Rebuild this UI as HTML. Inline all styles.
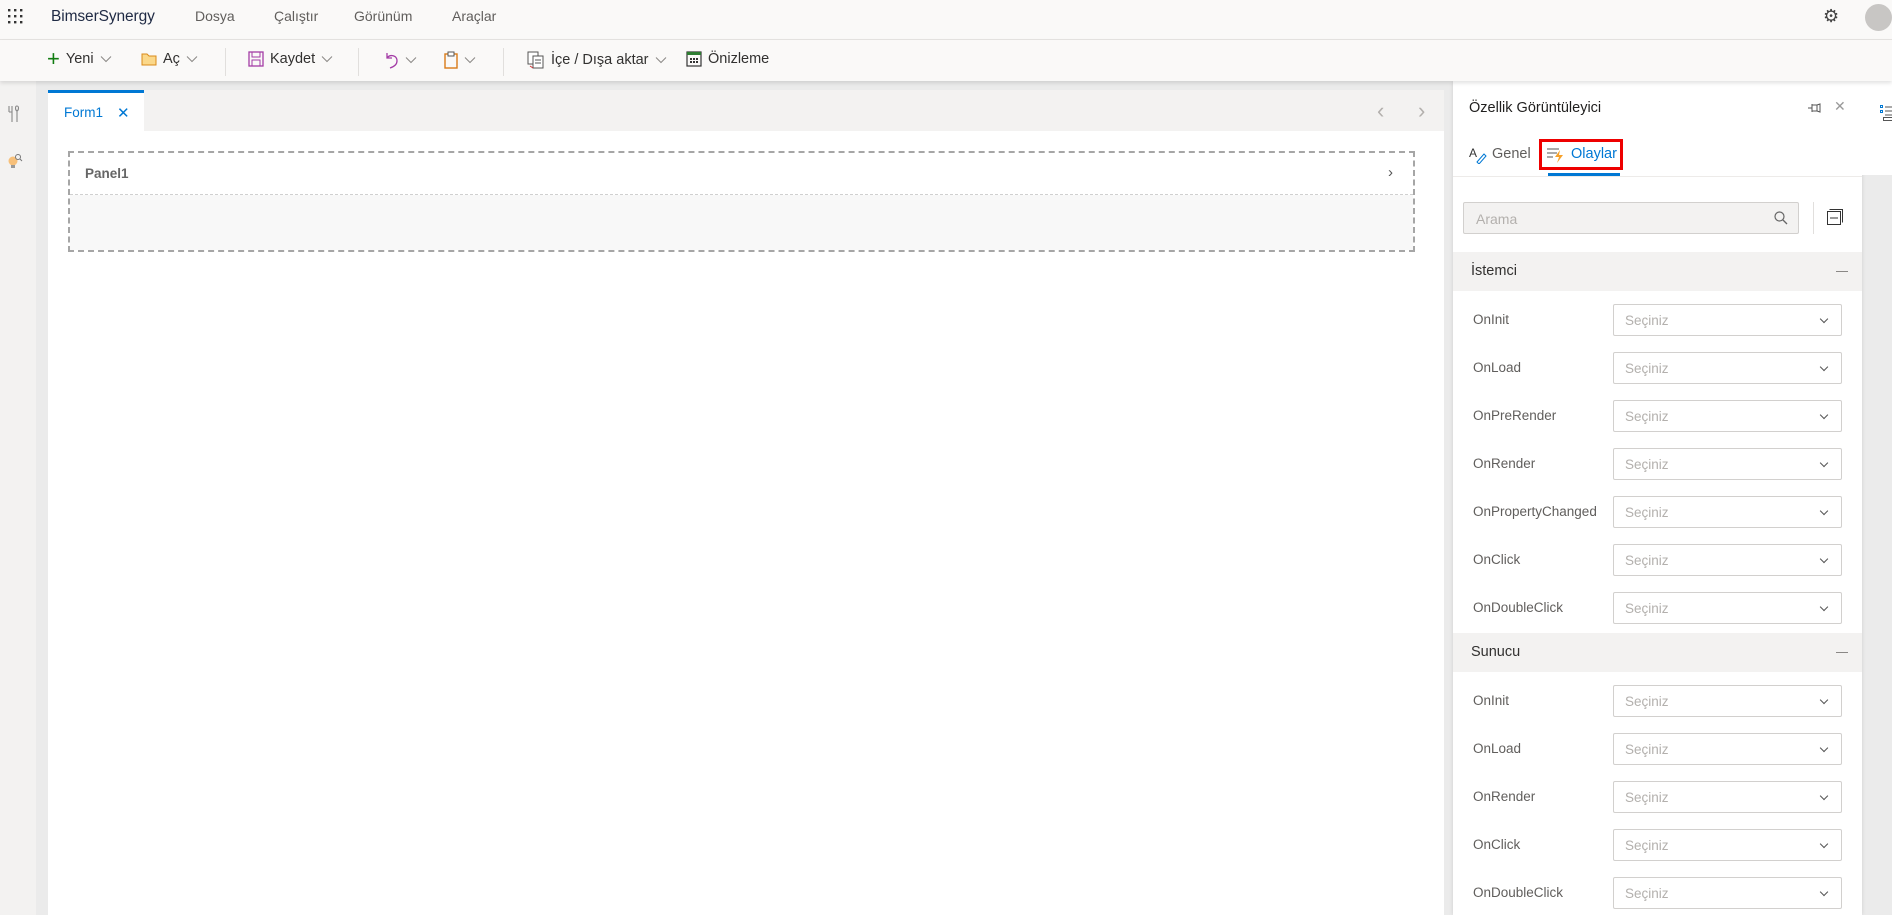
<!DOCTYPE html>
<html><head><meta charset="utf-8"><style>
*{box-sizing:border-box;margin:0;padding:0}
body{width:1892px;height:915px;overflow:hidden;background:#ebebeb;font-family:"Liberation Sans",sans-serif;position:relative;color:#323130}
.a{position:absolute}
.top{left:0;top:0;width:1892px;height:40px;background:#faf9f8;border-bottom:1px solid #e6e4e2}
.tb{left:0;top:40px;width:1892px;height:41px;background:#faf9f8;box-shadow:0 2px 4px rgba(0,0,0,.12);z-index:2}
.menu{font-size:14px;color:#605e5c;top:8px}
.tbi{top:51px;font-size:14.5px;color:#323130;display:flex;align-items:center;gap:6px}
.sep{top:48px;width:1px;height:28px;background:#e1dfdd}
.lbl{left:1473px;font-size:13.5px;color:#605e5c}
.sel{left:1613px;width:229px;height:32px;border:1px solid #d2d0ce;border-radius:2px;background:#fff;font-size:13.5px;color:#b3b0ad;padding:8px 11px}
.sel:after{content:"";position:absolute;right:14px;top:11px;width:5px;height:5px;border-right:1.5px solid #555;border-bottom:1.5px solid #555;transform:rotate(45deg)}
.sec{left:1453px;width:409px;height:39px;background:#f3f2f1;font-size:14.5px;color:#323130;padding:11px 18px}
.sec:after{content:"";position:absolute;right:14px;top:19px;width:12px;height:1px;background:#8a8886}
</style></head><body>
<div class="a top"></div>
<div class="a" style="left:7px;top:8px;width:16px;height:16px">
<svg width="16" height="16"><g fill="#333"><rect x="1" y="1" width="2.4" height="2.4"/><rect x="7" y="1" width="2.4" height="2.4"/><rect x="13" y="1" width="2.4" height="2.4"/><rect x="1" y="7" width="2.4" height="2.4"/><rect x="7" y="7" width="2.4" height="2.4"/><rect x="13" y="7" width="2.4" height="2.4"/><rect x="1" y="13" width="2.4" height="2.4"/><rect x="7" y="13" width="2.4" height="2.4"/><rect x="13" y="13" width="2.4" height="2.4"/></g></svg></div>
<div class="a" style="left:51px;top:8px;font-size:15.5px;color:#1f2a44;letter-spacing:-.1px">BimserSynergy</div>
<div class="a menu" style="left:195px">Dosya</div>
<div class="a menu" style="left:274px">Çalıştır</div>
<div class="a menu" style="left:354px">Görünüm</div>
<div class="a menu" style="left:452px">Araçlar</div>
<div class="a" style="left:1823px;top:6px;font-size:18px;color:#444">⚙</div>
<div class="a" style="left:1865px;top:4px;width:27px;height:27px;border-radius:50%;background:#c8c6c4"></div>

<div class="a tb"></div>
<svg width="0" height="0" style="position:absolute"><defs><symbol id="cv" viewBox="0 0 12 8"><path d="M1 1.5l5 5 5-5" fill="none" stroke="#8a8886" stroke-width="1"/></symbol></defs></svg>
<div class="a tbi" style="left:47px;z-index:3"><span style="color:#107c10;font-size:22px;line-height:14px">+</span> Yeni <svg width="12" height="8"><use href="#cv"/></svg></div>
<div class="a tbi" style="left:141px;z-index:3"><svg width="16" height="14"><path d="M1 2h5l2 2h7v9H1z" fill="#fbd88a" stroke="#d98a1a"/></svg> Aç <svg width="12" height="8"><use href="#cv"/></svg></div>
<div class="a sep" style="left:225px;z-index:3"></div>
<div class="a tbi" style="left:248px;z-index:3"><svg width="16" height="16"><rect x="1" y="1" width="14" height="14" fill="none" stroke="#a33ca6" stroke-width="1.3"/><rect x="4" y="1" width="8" height="5" fill="none" stroke="#a33ca6"/><rect x="4" y="9" width="8" height="6" fill="none" stroke="#a33ca6"/></svg> Kaydet <svg width="12" height="8"><use href="#cv"/></svg></div>
<div class="a sep" style="left:358px;z-index:3"></div>
<div class="a tbi" style="left:383px;z-index:3"><svg width="16" height="18"><path d="M4 2v5h5M4 7c3-4 10-3 10 3 0 4-4 6-7 7" fill="none" stroke="#a33ca6" stroke-width="1.3"/></svg> <svg width="12" height="8"><use href="#cv"/></svg></div>
<div class="a tbi" style="left:444px;z-index:3"><svg width="14" height="18"><rect x="1" y="3" width="12" height="14" fill="none" stroke="#d97b18" stroke-width="1.4"/><rect x="4" y="1" width="6" height="4" fill="#fff" stroke="#555"/></svg> <svg width="12" height="8"><use href="#cv"/></svg></div>
<div class="a sep" style="left:503px;z-index:3"></div>
<div class="a tbi" style="left:527px;z-index:3"><svg width="18" height="18"><rect x="1" y="1" width="10" height="12" fill="#fff" stroke="#555"/><rect x="6" y="5" width="10" height="12" fill="#fff" stroke="#555"/><path d="M8 9h6M8 12h6" stroke="#555"/><path d="M3 15l3 2" stroke="#d13438"/></svg> İçe / Dışa aktar <svg width="12" height="8"><use href="#cv"/></svg></div>
<div class="a tbi" style="left:686px;z-index:3"><svg width="16" height="16"><rect x="1" y="1" width="14" height="14" fill="none" stroke="#333" stroke-width="1.2"/><rect x="1" y="1" width="14" height="3" fill="#2e7d32"/><g fill="#333"><rect x="4" y="7" width="2" height="2"/><rect x="7" y="7" width="2" height="2"/><rect x="10" y="7" width="2" height="2"/><rect x="4" y="10" width="2" height="2"/><rect x="7" y="10" width="2" height="2"/><rect x="10" y="10" width="2" height="2"/></g></svg> Önizleme</div>

<div class="a" style="left:0;top:81px;width:36px;height:834px;background:#f3f2f1"></div>
<div class="a" style="left:6px;top:105px"><svg width="16" height="18"><path d="M3 1v6M6 1v6M3 7h3v10M11 1c-2 0-2 4 0 5v11M11 6c2-1 2-5 0-5" fill="none" stroke="#888" stroke-width="1.1"/></svg></div>
<div class="a" style="left:7px;top:153px"><svg width="16" height="16"><circle cx="6" cy="8" r="4.5" fill="#f7c07a"/><rect x="4" y="12" width="4" height="3" fill="#999"/><circle cx="11" cy="4" r="2.5" fill="none" stroke="#777"/><path d="M13 6l2 2" stroke="#777"/></svg></div>

<div class="a" style="left:48px;top:90px;width:1396px;height:825px;background:#fff"></div>
<div class="a" style="left:144px;top:90px;width:1300px;height:41px;background:#f3f2f1"></div>
<div class="a" style="left:48px;top:90px;width:96px;height:3px;background:#0078d4"></div>
<div class="a" style="left:64px;top:105px;font-size:13.5px;color:#0078d4">Form1</div>
<div class="a" style="left:117px;top:104px;font-size:15px;color:#0078d4">✕</div>
<div class="a" style="left:1377px;top:98px;font-size:22px;color:#b3b0ad">‹</div>
<div class="a" style="left:1418px;top:98px;font-size:22px;color:#b3b0ad">›</div>
<div class="a" style="left:68px;top:151px;width:1347px;height:101px;border:2px dashed #a6a6a6;background:#fff">
 <div style="height:42px;border-bottom:1px dashed #d0d0d0;padding:13px 15px;font-size:13.5px;font-weight:bold;color:#666">Panel1</div>
 <div style="height:55px;background:#f8f8f8"></div>
 <div class="a" style="right:20px;top:11px;font-size:15px;color:#555">›</div>
</div>

<div class="a" style="left:1453px;top:81px;width:409px;height:834px;background:#fff;box-shadow:0 0 4px rgba(0,0,0,.12)"></div>
<div class="a" style="left:1862px;top:81px;width:30px;height:94px;background:#fff"></div>
<div class="a" style="left:1880px;top:105px"><svg width="12" height="16"><g stroke="#0078d4" fill="none"><rect x="0.5" y="0.5" width="2" height="2"/><rect x="0.5" y="5.5" width="2" height="2"/></g><path d="M5 2h8M5 6h8M5 10h8" stroke="#555"/><rect x="3.5" y="12.5" width="9" height="3" fill="none" stroke="#555"/></svg></div>
<div class="a" style="left:1469px;top:100px;font-size:14.5px;color:#201f1e">Özellik Görüntüleyici</div>
<div class="a" style="left:1808px;top:101px"><svg width="14" height="12"><path d="M0 6h4M4 2v8M4 3h5v6H4M9 3l3-1v8l-3-1" fill="none" stroke="#555"/></svg></div>
<div class="a" style="left:1834px;top:98px;font-size:14px;color:#999">✕</div>
<div class="a" style="left:1469px;top:146px"><svg width="18" height="18"><text x="0" y="11" font-size="12" font-family="Liberation Sans" fill="#333">A</text><path d="M8 16l7-8 2 2-7 8z" fill="none" stroke="#0078d4"/></svg></div>
<div class="a" style="left:1492px;top:146px;font-size:14.5px;color:#605e5c">Genel</div>
<div class="a" style="left:1539px;top:139px;width:84px;height:31px;border:3px solid #e00"></div>
<div class="a" style="left:1547px;top:147px"><svg width="18" height="16"><path d="M0 2h12M0 6h10M0 10h6" stroke="#555"/><path d="M13 3l-5 7h4l-2 6 6-8h-4z" fill="#f7a12a"/></svg></div>
<div class="a" style="left:1571px;top:146px;font-size:14.5px;color:#0078d4">Olaylar</div>
<div class="a" style="left:1548px;top:173px;width:72px;height:3px;background:#0078d4"></div>
<div class="a" style="left:1453px;top:176px;width:409px;height:1px;background:#edebe9"></div>
<div class="a" style="left:1463px;top:202px;width:336px;height:32px;background:#f3f2f1;border:1px solid #d2d0ce;border-radius:2px;font-size:14px;color:#b3b0ad;padding:8px 12px">Arama
 <svg class="a" style="right:10px;top:8px" width="14" height="14"><circle cx="5.5" cy="5.5" r="4.5" fill="none" stroke="#666" stroke-width="1.2"/><path d="M9 9l4 4" stroke="#666" stroke-width="1.3"/></svg></div>
<div class="a" style="left:1813px;top:202px;width:1px;height:32px;background:#e1dfdd"></div>
<div class="a" style="left:1827px;top:209px"><svg width="16" height="16"><rect x="0.5" y="2.5" width="13" height="13" fill="none" stroke="#333"/><path d="M2.5 0.5h13v13" fill="none" stroke="#333"/><path d="M3 9h8" stroke="#333"/></svg></div>

<div class="a sec" style="top:252px">İstemci</div>
<div class="a lbl" style="top:312px">OnInit</div><div class="a sel" style="top:304px">Seçiniz</div>
<div class="a lbl" style="top:360px">OnLoad</div><div class="a sel" style="top:352px">Seçiniz</div>
<div class="a lbl" style="top:408px">OnPreRender</div><div class="a sel" style="top:400px">Seçiniz</div>
<div class="a lbl" style="top:456px">OnRender</div><div class="a sel" style="top:448px">Seçiniz</div>
<div class="a lbl" style="top:504px">OnPropertyChanged</div><div class="a sel" style="top:496px">Seçiniz</div>
<div class="a lbl" style="top:552px">OnClick</div><div class="a sel" style="top:544px">Seçiniz</div>
<div class="a lbl" style="top:600px">OnDoubleClick</div><div class="a sel" style="top:592px">Seçiniz</div>
<div class="a sec" style="top:633px">Sunucu</div>
<div class="a lbl" style="top:693px">OnInit</div><div class="a sel" style="top:685px">Seçiniz</div>
<div class="a lbl" style="top:741px">OnLoad</div><div class="a sel" style="top:733px">Seçiniz</div>
<div class="a lbl" style="top:789px">OnRender</div><div class="a sel" style="top:781px">Seçiniz</div>
<div class="a lbl" style="top:837px">OnClick</div><div class="a sel" style="top:829px">Seçiniz</div>
<div class="a lbl" style="top:885px">OnDoubleClick</div><div class="a sel" style="top:877px">Seçiniz</div>
</body></html>
